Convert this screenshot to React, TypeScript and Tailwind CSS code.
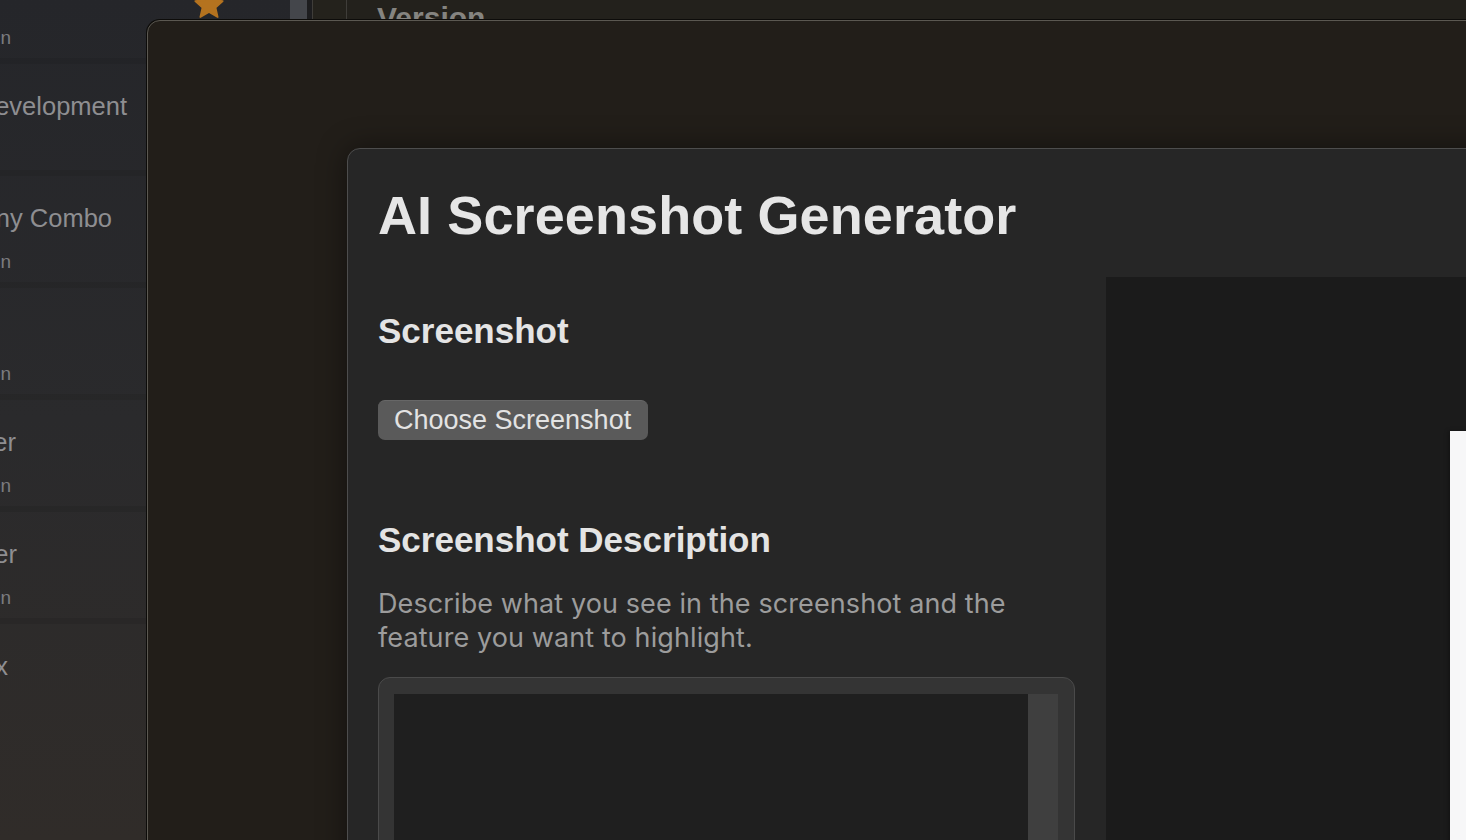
import React from "react";

const rows = [
  { title: "", titleW: "w-[127px]", sub: "Application", subW: "w-[11px]" },
  { title: "Development", titleW: "w-[127px]", sub: "", subW: "w-[11px]" },
  { title: "Company Combo", titleW: "w-[112px]", sub: "Application", subW: "w-[11px]" },
  { title: "", titleW: "w-[16px]", sub: "Application", subW: "w-[11px]" },
  { title: "Designer", titleW: "w-[16px]", sub: "Application", subW: "w-[11px]" },
  { title: "Developer", titleW: "w-[17px]", sub: "Application", subW: "w-[11px]" },
  { title: "Box", titleW: "w-[8px]", sub: "", subW: "w-[11px]" },
];

const Sidebar = () => {
  return (
    <div className="relative w-[290px] shrink-0 overflow-hidden bg-linear-to-b from-[#25262a] via-[#2a2a2c] to-[#302c29]">
      <div className="-mt-[54px]">
        {rows.map((r, i) => (
          <div key={i} className="h-[112px] border-t-[6px] border-black/[0.07] pt-[29px]">
            <div className={`flex h-[26px] justify-end whitespace-nowrap text-[25.5px] leading-[26px] text-[#8e8e91] ${r.titleW}`}>
              {r.title}
            </div>
            <div className={`mt-[21px] flex h-[19px] justify-end whitespace-nowrap text-[19px] leading-[19px] text-[#7b7b7e] ${r.subW}`}>
              {r.sub}
            </div>
          </div>
        ))}
      </div>
      <svg className="absolute left-[192px] top-[-12px]" width="34" height="34" viewBox="0 0 24 24">
        <path
          d="M12 2.2l2.9 6.3 6.8.7-5.1 4.6 1.5 6.7L12 17l-6.1 3.5 1.5-6.7-5.1-4.6 6.8-.7z"
          fill="#b5731f"
          stroke="#b5731f"
          strokeLinejoin="round"
          strokeWidth="1.2"
        />
      </svg>
    </div>
  );
};

const App = () => {
  return (
    <div className="relative h-[840px] w-[1466px] overflow-hidden bg-[#23211c] font-['Liberation_Sans',Arial,sans-serif]">
      {/* app behind */}
      <div className="flex h-full">
        <Sidebar />
        <div className="w-[17px] shrink-0 bg-[#44464b]" />
        <div className="w-[5px] shrink-0 bg-[#1d1d1f]" />
        <div className="w-[35px] shrink-0 border-x border-[#3f3d39] bg-[#24221c]" />
        <div className="flex-1 pl-[30px] pt-[3px]">
          <div className="text-[30px] font-semibold leading-[30px] text-[#858480]">Version</div>
        </div>
      </div>

      {/* middle window */}
      <div className="absolute left-[147px] top-[20px] h-[900px] w-[1400px] rounded-tl-[13px] border border-[#5b5851] bg-[#221e19] shadow-[0_0_0_1px_#0d0c0a] pl-[199px] pt-[127px]">
        {/* front window */}
        <div className="h-[760px] w-[1200px] overflow-hidden rounded-tl-[13px] border border-[#4d4d4d] bg-[#262626] shadow-[0_0_30px_rgba(0,0,0,0.45)]">
          <div className="h-[128px] pl-[30px] pt-[39px]">
            <h1 className="whitespace-nowrap text-[54px] font-bold leading-none tracking-[0.1px] text-[#e6e6e6]">
              AI Screenshot Generator
            </h1>
          </div>
          <div className="flex h-full">
            <div className="w-[758px] shrink-0 bg-[#262626] px-[30px] pt-[36px]">
              <h2 className="text-[35px] font-bold leading-none text-[#e4e4e4]">Screenshot</h2>
              <button className="mt-[52px] flex h-[40px] w-[270px] items-center rounded-[7px] border-t border-[#676767] bg-[#5a5a5a] pl-[16px] text-[27px] leading-none text-[#e3e3e3]">
                Choose Screenshot
              </button>
              <h2 className="mt-[82px] text-[35px] font-bold leading-none text-[#e4e4e4]">
                Screenshot Description
              </h2>
              <p className="mt-[30px] font-['Inter',sans-serif] text-[27px] leading-[34px] tracking-[0.1px] text-[#9c9c9c]">
                Describe what you see in the screenshot and the
                <br />
                feature you want to highlight.
              </p>
              <div className="mt-[22px] flex h-[300px] w-[697px] rounded-[12px] border border-[#4a4a4a] bg-[#343434] pl-[15px] pr-[16px] pt-[16px]">
                <div className="flex-1 bg-[#1f1f1f]" />
                <div className="w-[30px] bg-[#3f3f3f]" />
              </div>
            </div>
            <div className="flex-1 bg-[#1b1b1b] pl-[344px] pt-[154px]">
              <div className="h-full w-[40px] bg-[#f7f7f8] shadow-[-2px_0_4px_rgba(0,0,0,0.25)]" />
            </div>
          </div>
        </div>
      </div>
    </div>
  );
};

export default App;
